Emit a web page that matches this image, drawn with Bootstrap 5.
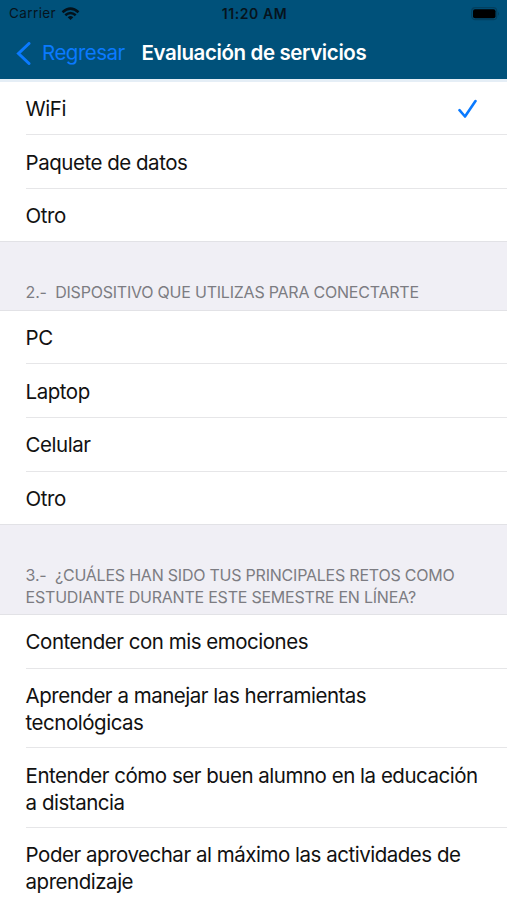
<!DOCTYPE html>
<html lang="es">
<head>
<meta charset="utf-8">
<meta name="viewport" content="width=device-width, initial-scale=1">
<title>Evaluación de servicios</title>
<link href="https://cdn.jsdelivr.net/npm/bootstrap@5.3.0/dist/css/bootstrap.min.css" rel="stylesheet">
<style>
body{font-family:Inter,"Liberation Sans",sans-serif;color:#111;height:900px;overflow:hidden;background:#fff}
.top-bar{background:#00517a;height:79px}
.status{height:27px;font-size:13.5px;color:#06141d;padding:0 7px 0 9px;letter-spacing:.4px}
.status>div{flex:1 1 0}
.wifi{margin-left:5px}
.clock{font-weight:600;font-size:14px;letter-spacing:.6px}
.nav-row{height:52px;padding:1px 0 0 16px}
.back{color:#0a7aff;font-size:20.5px;width:125.5px;letter-spacing:-.5px}
.page-title{color:#fff;font-size:20.5px;font-weight:600;letter-spacing:-.38px}
.strip{height:3px;background:#e5eef6}
.options{padding-left:25.6px;font-size:20.5px;line-height:27px;letter-spacing:-.48px}
.options span{white-space:nowrap}
.options li{height:54px;padding:1px 29px 0 0;border-bottom:1px solid #e6e6e8}
.options li.short{height:53px}
.options li.last{height:52px;border:0}
.options li.tall{height:80px;padding-top:2px}
.options li.tall-first{height:79px;padding-top:2px}
.options li.tall:last-child{border-color:transparent;padding-top:0}
.section-head{background:#f0eff5;border-top:1px solid #e2e2e6;border-bottom:1px solid #e2e2e6;color:#7c7c82;font-size:16px;line-height:22px;letter-spacing:-.22px;padding:0 20px 7px 25.6px;white-space:pre}
.h-one{height:70px}
.h-two{height:91px;padding-bottom:6px}
</style>
</head>
<body>
<header class="top-bar">
  <div class="status d-flex align-items-center">
    <div class="d-flex align-items-center"><span>Carrier</span>
      <svg class="wifi" width="19" height="14" viewBox="0 0 18 14" fill="none" stroke="#03121b" stroke-width="2.5"><path d="M1 5.2Q9-2 17 5.2M3.8 8.3Q9 3.6 14.2 8.3"/><path d="M9 13 6.2 10.2Q9 7.8 11.8 10.2Z" fill="#03121b" stroke="none"/></svg>
    </div>
    <span class="clock">11:20 AM</span>
    <div class="d-flex justify-content-end">
      <svg width="30" height="14" viewBox="0 0 30 14"><rect x="1.7" y=".7" width="25" height="12" rx="3.5" fill="none" stroke="#03405f" stroke-width="1.2"/><rect x="3" y="2.2" width="22.5" height="9" rx="2" fill="#000"/><path d="M28 4.8q2 1.9 0 4z" fill="#03405f"/></svg>
    </div>
  </div>
  <nav class="nav-row d-flex align-items-center">
    <a class="back d-flex align-items-center text-decoration-none" href="#">
      <svg class="me-2" width="18" height="24" viewBox="0 0 18 24" fill="none" stroke="#0a7aff" stroke-width="3" stroke-linecap="round"><path d="M13 1.5 2.5 11.5 13 21.5"/></svg><span>Regresar</span>
    </a>
    <h1 class="page-title mb-0">Evaluación de servicios</h1>
  </nav>
</header>
<div class="strip"></div>
<main>
  <ul class="options list-unstyled mb-0">
    <li class="short d-flex align-items-center justify-content-between"><span>WiFi</span>
      <svg width="20" height="20" viewBox="0 0 20 20" fill="none" stroke="#0a7aff" stroke-width="2.6" stroke-linecap="round" stroke-linejoin="round"><path d="M1.5 11.2 7 17.5 17.5 2"/></svg></li>
    <li class="d-flex align-items-center"><span>Paquete de datos</span></li>
    <li class="last d-flex align-items-center"><span>Otro</span></li>
  </ul>
  <h2 class="section-head h-one d-flex align-items-end mb-0 fw-normal">2.-  DISPOSITIVO QUE UTILIZAS PARA CONECTARTE</h2>
  <ul class="options list-unstyled mb-0">
    <li class="short d-flex align-items-center"><span>PC</span></li>
    <li class="d-flex align-items-center"><span>Laptop</span></li>
    <li class="d-flex align-items-center pt-0"><span>Celular</span></li>
    <li class="last d-flex align-items-center"><span>Otro</span></li>
  </ul>
  <h2 class="section-head h-two d-flex align-items-end mb-0 fw-normal">3.-  ¿CUÁLES HAN SIDO TUS PRINCIPALES RETOS COMO
ESTUDIANTE DURANTE ESTE SEMESTRE EN LÍNEA?</h2>
  <ul class="options list-unstyled mb-0">
    <li class="d-flex align-items-center pt-0"><span>Contender con mis emociones</span></li>
    <li class="tall tall-first d-flex align-items-center"><span>Aprender a manejar las herramientas<br>tecnológicas</span></li>
    <li class="tall d-flex align-items-center"><span>Entender cómo ser buen alumno en la educación<br>a distancia</span></li>
    <li class="tall d-flex align-items-center"><span>Poder aprovechar al máximo las actividades de<br>aprendizaje</span></li>
  </ul>
</main>
<script src="https://cdn.jsdelivr.net/npm/bootstrap@5.3.0/dist/js/bootstrap.bundle.min.js"></script>
</body>
</html>
